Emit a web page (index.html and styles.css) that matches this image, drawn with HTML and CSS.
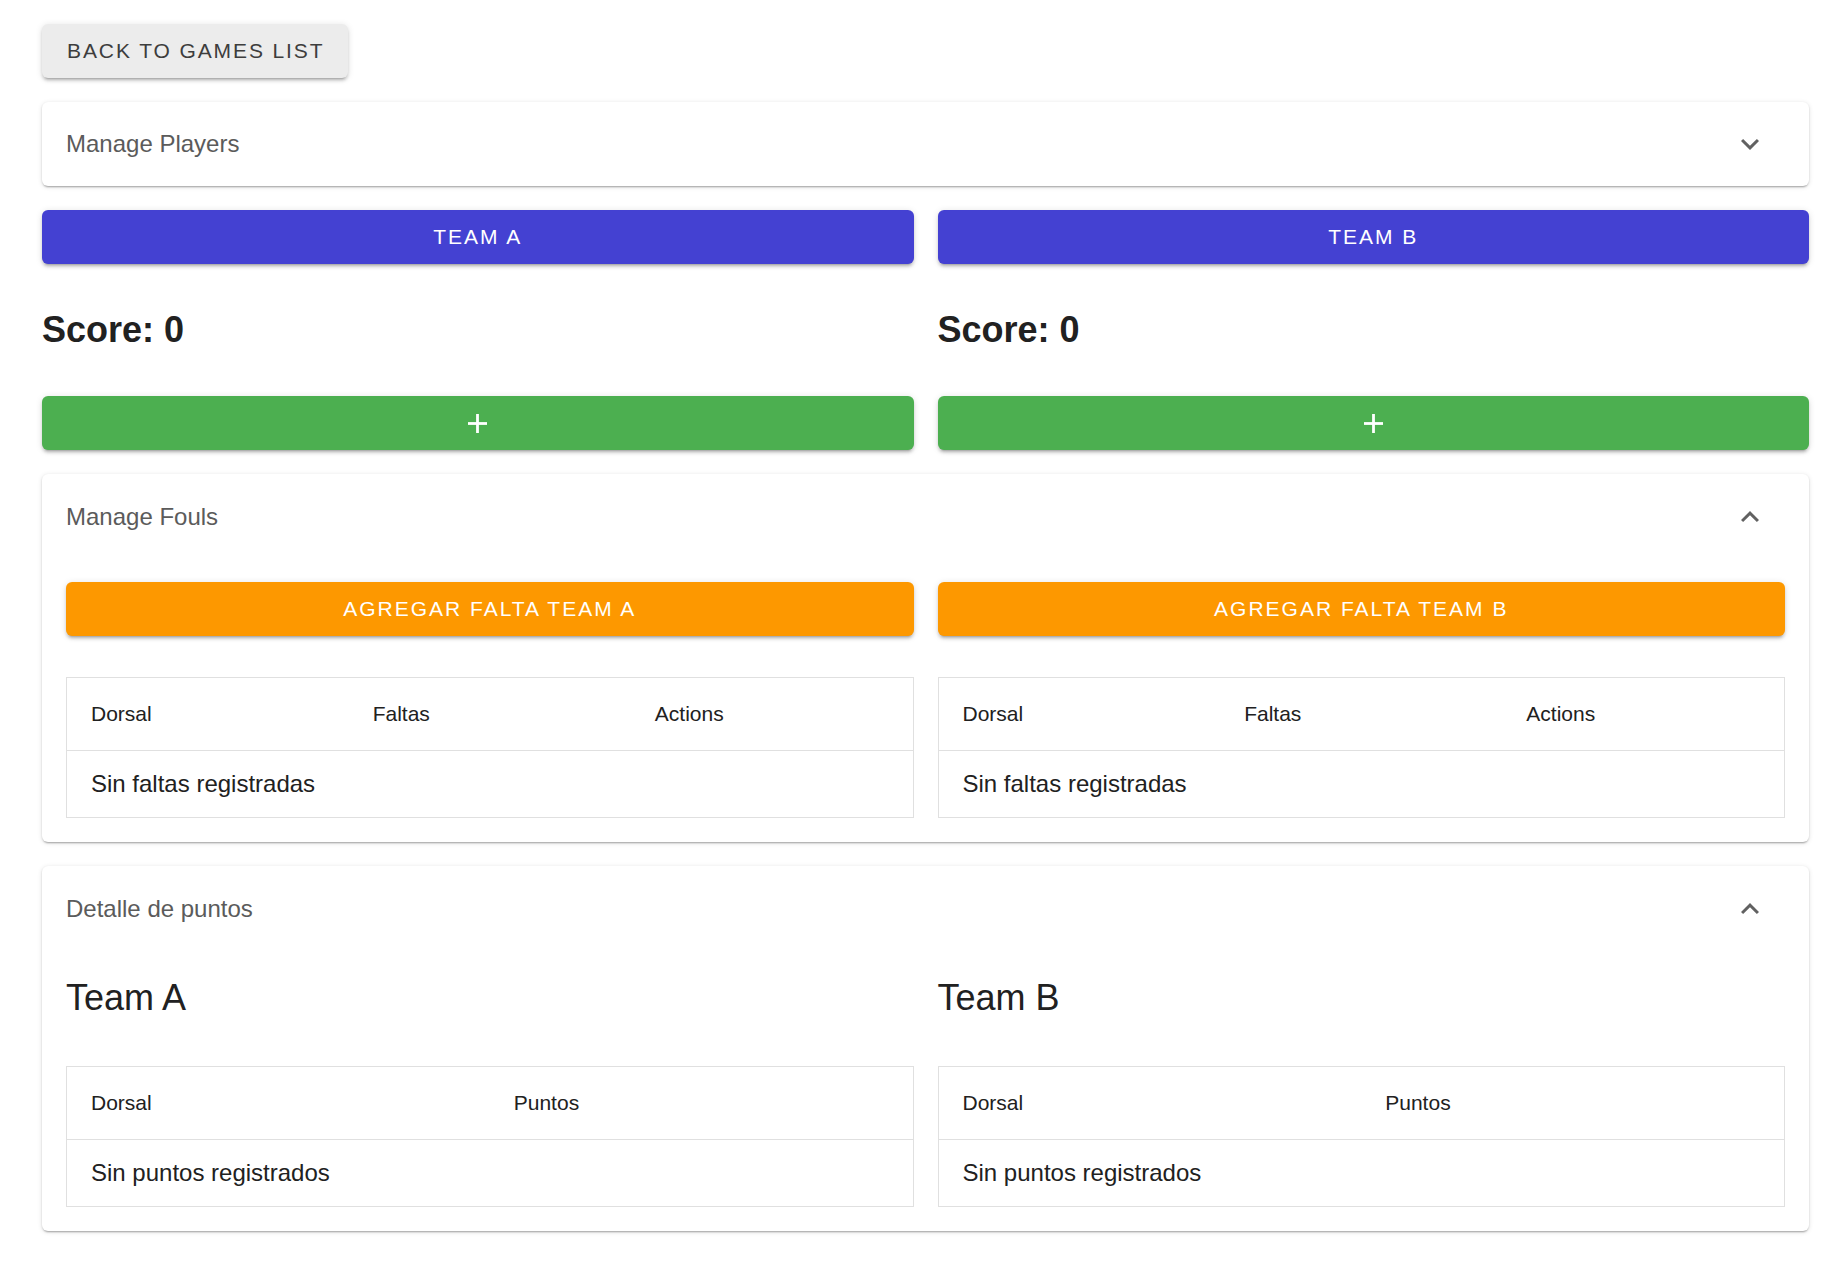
FILE: index.html
```html
<!DOCTYPE html>
<html lang="es">

<head>
  <meta charset="UTF-8">
  <title>Game Detail</title>
  <link rel="stylesheet" href="styles.css">
</head>

<body>

  <div class="page">

    <button class="btn btn-back">Back to games list</button>

    <div class="accordion">
      <div class="accordion-summary">
        <span class="accordion-title">Manage Players</span>
        <svg class="chevron" viewBox="0 0 24 24"><path d="M16.59 8.59 12 13.17 7.41 8.59 6 10l6 6 6-6z"/></svg>
      </div>
    </div>

    <div class="teams">
      <div class="team-col">
        <button class="btn btn-team">Team A</button>
        <h2 class="score">Score: 0</h2>
        <button class="btn btn-add" aria-label="Add point team A">
          <svg class="plus" viewBox="0 0 19 19"><rect x="0" y="8.1" width="19" height="2.8"/><rect x="8.1" y="0" width="2.8" height="19"/></svg>
        </button>
      </div>
      <div class="team-col">
        <button class="btn btn-team">Team B</button>
        <h2 class="score">Score: 0</h2>
        <button class="btn btn-add" aria-label="Add point team B">
          <svg class="plus" viewBox="0 0 19 19"><rect x="0" y="8.1" width="19" height="2.8"/><rect x="8.1" y="0" width="2.8" height="19"/></svg>
        </button>
      </div>
    </div>

    <!-- Manage Fouls -->
    <div class="accordion expanded">
      <div class="accordion-summary">
        <span class="accordion-title">Manage Fouls</span>
        <svg class="chevron up" viewBox="0 0 24 24"><path d="M16.59 8.59 12 13.17 7.41 8.59 6 10l6 6 6-6z"/></svg>
      </div>
      <div class="accordion-details">
        <div class="team-col">
          <button class="btn btn-foul">Agregar falta Team A</button>
          <table class="data-table cols-3">
            <thead>
              <tr><th>Dorsal</th><th>Faltas</th><th>Actions</th></tr>
            </thead>
            <tbody>
              <tr><td colspan="3">Sin faltas registradas</td></tr>
            </tbody>
          </table>
        </div>
        <div class="team-col">
          <button class="btn btn-foul">Agregar falta Team B</button>
          <table class="data-table cols-3">
            <thead>
              <tr><th>Dorsal</th><th>Faltas</th><th>Actions</th></tr>
            </thead>
            <tbody>
              <tr><td colspan="3">Sin faltas registradas</td></tr>
            </tbody>
          </table>
        </div>
      </div>
    </div>

    <!-- Detalle de puntos -->
    <div class="accordion expanded">
      <div class="accordion-summary">
        <span class="accordion-title">Detalle de puntos</span>
        <svg class="chevron up" viewBox="0 0 24 24"><path d="M16.59 8.59 12 13.17 7.41 8.59 6 10l6 6 6-6z"/></svg>
      </div>
      <div class="accordion-details">
        <div class="team-col">
          <h3 class="team-heading">Team A</h3>
          <table class="data-table cols-2">
            <thead>
              <tr><th>Dorsal</th><th>Puntos</th></tr>
            </thead>
            <tbody>
              <tr><td colspan="2">Sin puntos registrados</td></tr>
            </tbody>
          </table>
        </div>
        <div class="team-col">
          <h3 class="team-heading">Team B</h3>
          <table class="data-table cols-2">
            <thead>
              <tr><th>Dorsal</th><th>Puntos</th></tr>
            </thead>
            <tbody>
              <tr><td colspan="2">Sin puntos registrados</td></tr>
            </tbody>
          </table>
        </div>
      </div>
    </div>

  </div>

</body>

</html>
```

FILE: styles.css
```css
body {
  margin: 0;
  background-color: #ffffff;
  font-family: "Liberation Sans", Arial, Helvetica, sans-serif;
  color: #212121;
}

.page {
  display: flex;
  flex-direction: column;
  gap: 24px;
  padding: 24px 29px 40px 42px;
}

/* buttons */
.btn {
  display: flex;
  align-items: center;
  justify-content: center;
  height: 54px;
  padding: 0 24px;
  border: none;
  border-radius: 6px;
  font-family: inherit;
  font-size: 21px;
  letter-spacing: 2px;
  text-transform: uppercase;
  white-space: nowrap;
  color: #ffffff;
  cursor: pointer;
  box-shadow: 0 4px 2px -3px rgba(0, 0, 0, 0.2), 0 3px 3px 0 rgba(0, 0, 0, 0.14), 0 1px 7px 0 rgba(0, 0, 0, 0.12);
}

.btn-back {
  align-self: flex-start;
  padding: 0 23px 0 25px;
  letter-spacing: 1.9px;
  background-color: #ececec;
  color: #3d3d3d;
}

.btn-team {
  width: 100%;
  background-color: #4441d2;
}

.btn-add {
  width: 100%;
  background-color: #4caf50;
}

.btn-foul {
  width: 100%;
  background-color: #fd9800;
}

.plus {
  width: 19px;
  height: 19px;
  fill: #ffffff;
}

/* accordion */
.accordion {
  background-color: #ffffff;
  border-radius: 6px;
  box-shadow: 0 3px 2px -2px rgba(0, 0, 0, 0.2), 0 1px 2px 0 rgba(0, 0, 0, 0.14), 0 1px 5px 0 rgba(0, 0, 0, 0.12);
}

.accordion-summary {
  display: flex;
  align-items: center;
  justify-content: space-between;
  padding: 24px 41px 24px 24px;
}

.expanded .accordion-summary {
  align-items: flex-start;
  height: 96px;
  padding-top: 25px;
  box-sizing: border-box;
}

.accordion-title {
  font-size: 24px;
  line-height: 36px;
  color: #5b5b5b;
}

.chevron {
  width: 36px;
  height: 36px;
  fill: #616161;
}

.chevron.up {
  transform: rotate(180deg);
}

.accordion-details {
  display: grid;
  grid-template-columns: 1fr 1fr;
  gap: 24px;
  padding: 12px 24px 24px;
}

/* teams */
.teams {
  display: grid;
  grid-template-columns: 1fr 1fr;
  gap: 24px;
}

.team-col {
  display: flex;
  flex-direction: column;
  min-width: 0;
}

.score {
  margin: 42px 0;
  font-size: 36px;
  line-height: 48px;
  font-weight: bold;
  color: #212121;
}

.team-heading {
  margin: 0 0 44px;
  font-size: 36px;
  line-height: 48px;
  font-weight: normal;
  color: #212121;
}

/* tables */
.data-table {
  width: 100%;
  border: 1px solid #e0e0e0;
  border-collapse: collapse;
  table-layout: fixed;
}

.btn-foul + .data-table {
  margin-top: 41px;
}

.data-table th {
  height: 72px;
  padding: 0 24px;
  font-size: 21px;
  font-weight: normal;
  text-align: left;
  color: #212121;
  border-bottom: 1px solid #e0e0e0;
}

.data-table td {
  height: 66px;
  padding: 0 24px;
  font-size: 24px;
  color: #212121;
}
```
